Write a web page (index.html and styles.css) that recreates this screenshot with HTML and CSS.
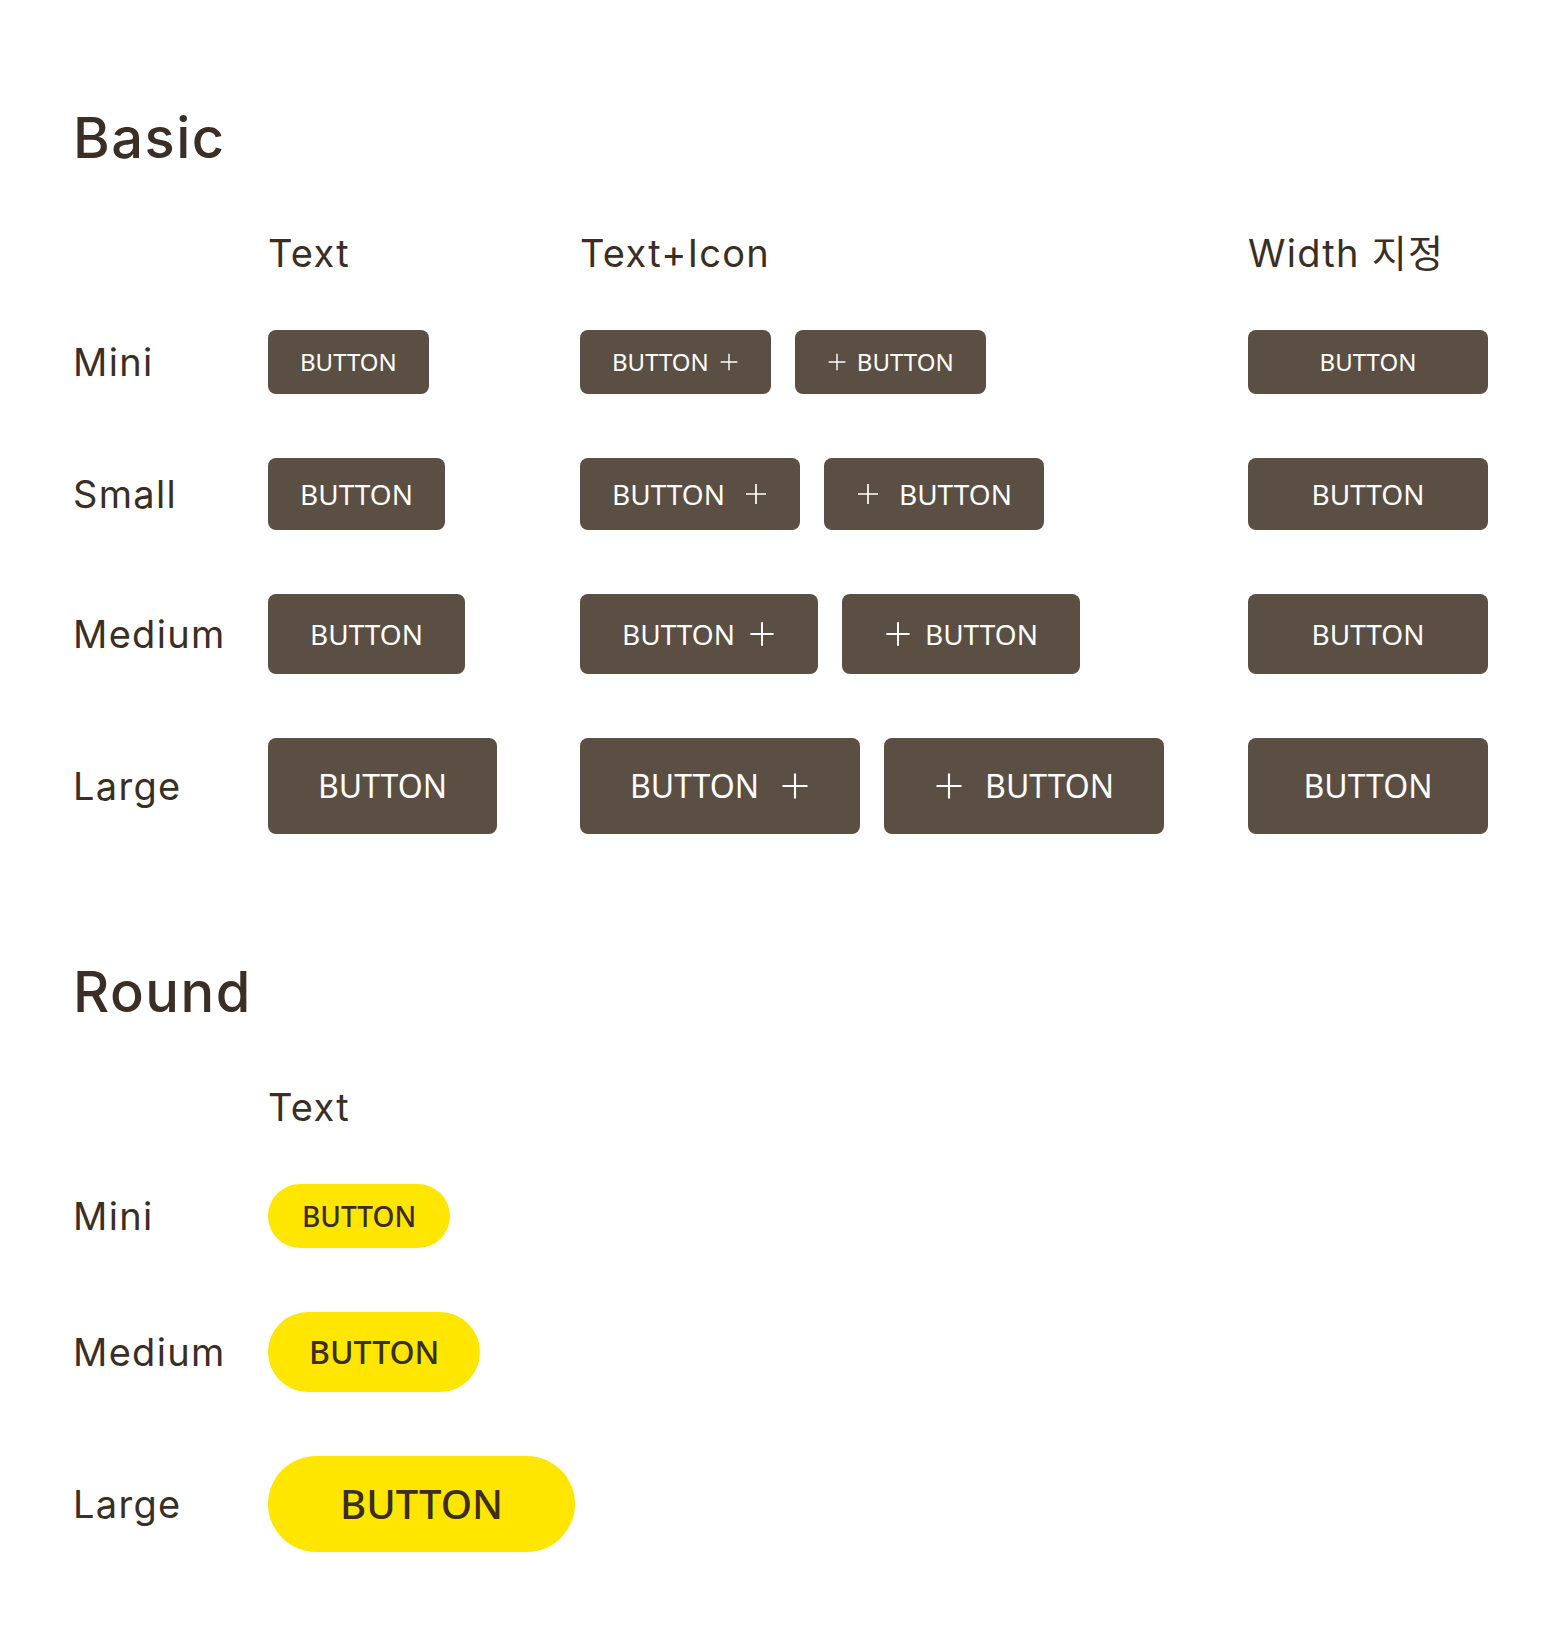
FILE: index.html
```html
<!DOCTYPE html>
<html lang="ko">
<head>
  <meta charset="UTF-8" />
  <meta name="viewport" content="width=device-width, initial-scale=1.0"/>
  <title>Button</title>
  <link rel="stylesheet" href="styles.css">
</head>
<body>

<section class="group">
  <h2 class="group-title">Basic</h2>

  <div class="matrix matrix-basic">
    <span></span>
    <span class="col-head">Text</span>
    <span class="col-head">Text+Icon</span>
    <span class="col-head">Width 지정</span>

    <!-- Mini -->
    <span class="row-head">Mini</span>
    <div class="cell"><button class="btn btn-mini">BUTTON</button></div>
    <div class="cell pair">
      <button class="btn btn-mini">BUTTON <svg class="ico" viewBox="0 0 24 24"><path d="M12 2v20M2 12h20"/></svg></button>
      <button class="btn btn-mini"><svg class="ico" viewBox="0 0 24 24"><path d="M12 2v20M2 12h20"/></svg> BUTTON</button>
    </div>
    <div class="cell"><button class="btn btn-mini btn-fixed">BUTTON</button></div>

    <!-- Small -->
    <span class="row-head">Small</span>
    <div class="cell"><button class="btn btn-small">BUTTON</button></div>
    <div class="cell pair">
      <button class="btn btn-small">BUTTON <svg class="ico" viewBox="0 0 24 24"><path d="M12 2v20M2 12h20"/></svg></button>
      <button class="btn btn-small"><svg class="ico" viewBox="0 0 24 24"><path d="M12 2v20M2 12h20"/></svg> BUTTON</button>
    </div>
    <div class="cell"><button class="btn btn-small btn-fixed">BUTTON</button></div>

    <!-- Medium -->
    <span class="row-head">Medium</span>
    <div class="cell"><button class="btn btn-medium">BUTTON</button></div>
    <div class="cell pair">
      <button class="btn btn-medium">BUTTON <svg class="ico" viewBox="0 0 24 24"><path d="M12 2v20M2 12h20"/></svg></button>
      <button class="btn btn-medium"><svg class="ico" viewBox="0 0 24 24"><path d="M12 2v20M2 12h20"/></svg> BUTTON</button>
    </div>
    <div class="cell"><button class="btn btn-medium btn-fixed">BUTTON</button></div>

    <!-- Large -->
    <span class="row-head">Large</span>
    <div class="cell"><button class="btn btn-large">BUTTON</button></div>
    <div class="cell pair">
      <button class="btn btn-large">BUTTON <svg class="ico" viewBox="0 0 24 24"><path d="M12 2v20M2 12h20"/></svg></button>
      <button class="btn btn-large"><svg class="ico" viewBox="0 0 24 24"><path d="M12 2v20M2 12h20"/></svg> BUTTON</button>
    </div>
    <div class="cell"><button class="btn btn-large btn-fixed">BUTTON</button></div>
  </div>
</section>

<section class="group">
  <h2 class="group-title">Round</h2>

  <div class="matrix matrix-round">
    <span></span>
    <span class="col-head">Text</span>

    <span class="row-head">Mini</span>
    <div class="cell"><button class="btn round round-mini">BUTTON</button></div>

    <span class="row-head">Medium</span>
    <div class="cell"><button class="btn round round-medium">BUTTON</button></div>

    <span class="row-head">Large</span>
    <div class="cell"><button class="btn round round-large">BUTTON</button></div>
  </div>
</section>

</body>
</html>
```

FILE: styles.css
```css
* {
  box-sizing: border-box;
}

body {
  margin: 0;
  padding: 110px 73px 100px;
  font-family: Inter, "Noto Sans", sans-serif;
  color: #3a2e25;
  background: #fff;
}

.group + .group {
  margin-top: 130px;
}

.group-title {
  margin: 0 0 74px;
  font-size: 56px;
  line-height: 56px;
  font-weight: 500;
  letter-spacing: 1.5px;
}

.matrix {
  display: grid;
  row-gap: 64px;
  align-items: center;
}

.matrix-basic {
  grid-template-columns: 195px 312px 668px 240px;
}

.matrix-round {
  grid-template-columns: 195px auto;
}

.col-head,
.row-head {
  font-size: 38px;
  line-height: 26px;
  font-weight: 400;
  letter-spacing: 1.3px;
  white-space: nowrap;
}

.col-head {
  font-family: Inter, "Noto Sans CJK KR", sans-serif;
}

.row-head {
  line-height: 46px;
}

.cell {
  display: flex;
  align-items: center;
}

.pair {
  gap: 24px;
}

/* buttons */
.btn {
  display: inline-flex;
  align-items: center;
  justify-content: center;
  border: none;
  border-radius: 8px;
  background-color: #5b4f43;
  color: #fff;
  font-family: "Noto Sans", sans-serif;
  font-weight: 400;
  line-height: 1;
  white-space: nowrap;
  cursor: pointer;
  padding: 0 32px;
}

.btn:hover {
  background-color: #4c4137;
}

.ico {
  flex: none;
  fill: none;
  stroke: currentColor;
  stroke-width: 1.7;
}

.btn-mini {
  height: 64px;
  font-size: 24px;
  gap: 10px;
}
.btn-mini .ico { width: 20px; height: 20px; }

.btn-small {
  height: 72px;
  font-size: 28px;
  gap: 19px;
}
.btn-small .ico { width: 24px; height: 24px; }

.btn-medium {
  height: 80px;
  font-size: 28px;
  padding: 0 42px;
  gap: 13px;
}
.btn-medium .ico { width: 28px; height: 28px; }

.btn-large {
  height: 96px;
  font-size: 32px;
  padding: 0 50px;
  gap: 21px;
}
.btn-large .ico { width: 30px; height: 30px; }

.btn-fixed {
  width: 240px;
  padding: 0;
}

/* round */
.round {
  border-radius: 999px;
  background-color: #ffe600;
  color: #3a2e25;
  font-weight: 500;
}

.round:hover {
  background-color: #f5dc00;
}

.round-mini {
  height: 64px;
  font-size: 28px;
  padding: 0 34px;
}

.round-medium {
  height: 80px;
  font-size: 32px;
  padding: 0 41px;
}

.round-large {
  height: 96px;
  font-size: 40px;
  padding: 0 72px;
}
```
